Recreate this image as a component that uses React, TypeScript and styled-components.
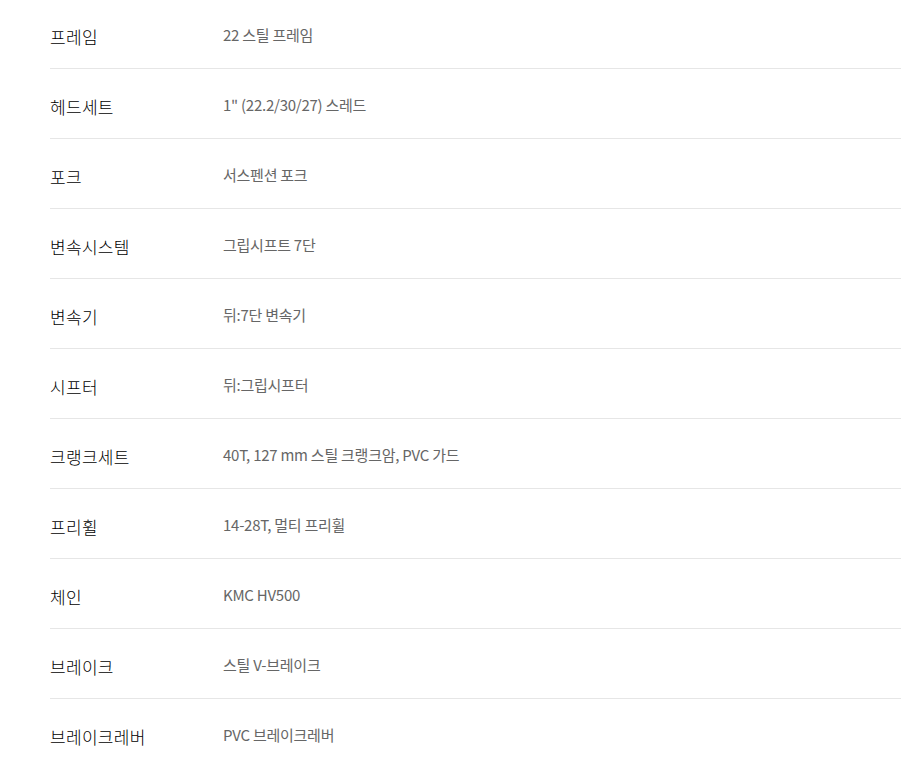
import React from "react";
import styled, { createGlobalStyle } from "styled-components";

const Global = createGlobalStyle`
  html, body { margin: 0; padding: 0; background: #fff; }
  body { font-family: "Noto Sans CJK KR", "Noto Sans", sans-serif; }
`;

const Page = styled.div`
  padding-left: 50px;
`;

const Table = styled.dl`
  margin: -1px 0 0 0;
  display: flex;
  flex-direction: column;
`;

const Row = styled.div`
  display: grid;
  grid-template-columns: 173px 1fr;
  align-items: center;
  height: 69px;
  border-bottom: 1px solid #e6e6e6;
  box-sizing: content-box;
`;

const Label = styled.dt`
  margin: 0;
  padding-top: 6px;
  font-size: 17px;
  line-height: 22px;
  font-weight: 300;
  color: #000;
  letter-spacing: 0.3px;
`;

const Value = styled.dd`
  margin: 0;
  padding-top: 2px;
  font-size: 15px;
  line-height: 20px;
  font-weight: 400;
  color: #666;
  letter-spacing: -0.25px;
`;

const specs: [string, string][] = [
  ["프레임", "22 스틸 프레임"],
  ["헤드세트", "1\" (22.2/30/27) 스레드"],
  ["포크", "서스펜션 포크"],
  ["변속시스템", "그립시프트 7단"],
  ["변속기", "뒤:7단 변속기"],
  ["시프터", "뒤:그립시프터"],
  ["크랭크세트", "40T, 127 mm 스틸 크랭크암, PVC 가드"],
  ["프리휠", "14-28T, 멀티 프리휠"],
  ["체인", "KMC HV500"],
  ["브레이크", "스틸 V-브레이크"],
  ["브레이크레버", "PVC 브레이크레버"],
];

export default function App() {
  return (
    <>
      <Global />
      <Page>
        <Table>
          {specs.map(([k, v]) => (
            <Row key={k}>
              <Label>{k}</Label>
              <Value>{v}</Value>
            </Row>
          ))}
        </Table>
      </Page>
    </>
  );
}
